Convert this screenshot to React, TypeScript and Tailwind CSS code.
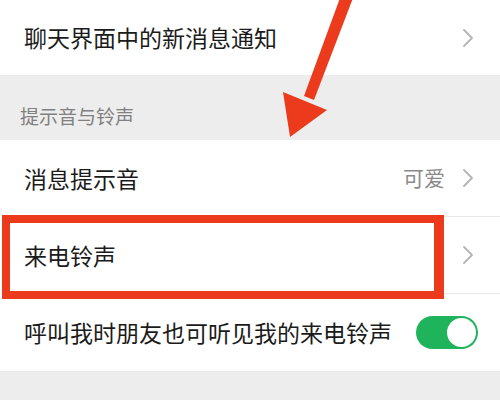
import React from "react";

const Chevron = () => (
  <svg width="12" height="20" viewBox="0 0 12 20" className="shrink-0">
    <polyline
      points="2,2 10,10 2,18"
      fill="none"
      stroke="#b4b4b4"
      strokeWidth="1.8"
      strokeLinecap="round"
      strokeLinejoin="round"
    />
  </svg>
);

const Row = ({
  label,
  value,
  right,
  border,
}: {
  label: string;
  value?: string;
  right?: React.ReactNode;
  border?: boolean;
}) => (
  <div className="bg-white pl-6">
    <div
      className={`flex h-[77px] items-center pr-[26px] ${
        border ? "border-b border-[#e8e8e8]" : ""
      }`}
    >
      <div className="flex-1 text-[23px] text-[#1b1b1b]">{label}</div>
      {value && <div className="mr-[17px] text-[21px] text-[#8a8a8a]">{value}</div>}
      {right ?? <Chevron />}
    </div>
  </div>
);

const Toggle = () => (
  <div className="-mr-[4px] flex h-[33px] w-[62px] items-center justify-end rounded-full bg-[#1fb45c] p-[2px]">
    <div className="h-[29px] w-[29px] rounded-full bg-white" />
  </div>
);

export default function App() {
  return (
    <div
      className="relative h-[400px] w-[500px] overflow-hidden bg-[#ededed]"
      style={{ fontFamily: '"Noto Sans CJK SC", "Noto Sans", sans-serif' }}
    >
      <div className="flex h-[75px] items-center bg-white pl-6 pr-[26px]">
        <div className="flex-1 text-[23px] text-[#1b1b1b]">聊天界面中的新消息通知</div>
        <Chevron />
      </div>

      <div className="flex h-[65px] items-end pb-[10px] pl-5 text-[19px] text-[#808080]">
        提示音与铃声
      </div>

      <Row label="消息提示音" value="可爱" border />
      <Row label="来电铃声" border />
      <Row label="呼叫我时朋友也可听见我的来电铃声" right={<Toggle />} />

      {/* red highlight box */}
      <div className="absolute left-[2px] top-[215px] h-[84px] w-[442px] border-[8px] border-[#ec3a1c] border-r-[10px]" />

      {/* red arrow */}
      <svg
        className="absolute left-0 top-0"
        width="500"
        height="160"
        viewBox="0 0 500 160"
      >
        <polygon
          points="340,-2 353,-2 314,100 304,96"
          fill="#ec3a1c"
        />
        <polygon points="283,92 327,110 290,137" fill="#ec3a1c" />
      </svg>
    </div>
  );
}
